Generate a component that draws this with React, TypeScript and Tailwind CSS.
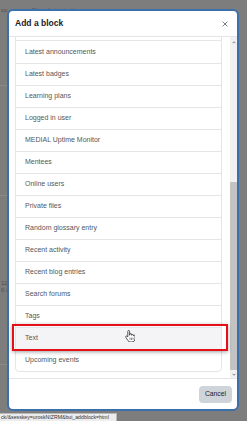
const blocks = [
  'Latest announcements',
  'Latest badges',
  'Learning plans',
  'Logged in user',
  'MEDIAL Uptime Monitor',
  'Mentees',
  'Online users',
  'Private files',
  'Random glossary entry',
  'Recent activity',
  'Recent blog entries',
  'Search forums',
  'Tags',
  'Text',
  'Upcoming events',
];

function HandCursor() {
  return (
    <svg width="10" height="12" viewBox="0 0 18 22" className="absolute left-[116px] top-[319px]">
      <path
        d="M5 2.5c0-1 .7-1.7 1.6-1.7s1.6.7 1.6 1.7v7l.6-.1V8c0-.9.7-1.5 1.5-1.5s1.5.6 1.5 1.5v1.6h.4c0-.9.7-1.5 1.5-1.5s1.5.6 1.5 1.5v1h.2c0-.8.6-1.3 1.4-1.3s1.4.6 1.4 1.4v5.2c0 3.4-2.4 6-5.8 6H9.6c-1.8 0-3.3-.9-4.3-2.4L1.4 13.4c-.5-.8-.3-1.8.5-2.3.7-.4 1.6-.3 2.2.3L5 12.6z"
        fill="#fff"
        stroke="#222"
        strokeWidth="1.4"
        strokeLinejoin="round"
      />
      <path d="M9 14v4M11.8 14v4M14.6 14v4" stroke="#222" strokeWidth="1" />
    </svg>
  );
}

export default function App() {
  return (
    <div className="relative h-[421px] w-[247px] overflow-hidden bg-[#7d7d7d] font-['Liberation_Sans',Arial,sans-serif]">
      {/* page behind the dialog */}
      <div className="flex h-full flex-col text-[6px] text-[#4e4e4e]">
        <div className="flex h-[14px] items-start gap-[24px] pt-[6px] pl-[1px]">
          <span>co</span>
          <span>Site administration</span>
        </div>
        <div className="mt-[71px] h-px w-[7px] bg-[#8a8a8a]" />
        <div className="mt-[109px] h-px w-[7px] bg-[#8a8a8a]" />
        <div className="mt-[84px] flex flex-col pl-[1px] leading-[7px]">
          <span>12</span>
          <span>0 A</span>
        </div>
        <div className="mt-[70px] h-px w-[7px] bg-[#8a8a8a]" />
        <div className="mt-auto flex h-[8px] w-[117px] items-center border-t border-r border-[#b9b9b9] bg-[#ececec] pl-[1px] text-[5.2px] leading-none whitespace-nowrap text-[#333]">
          ck/&amp;sesskey=uroskNIZRM&amp;bui_addblock=html
        </div>
      </div>

      {/* dialog */}
      <div className="absolute top-[9px] left-[7px] flex h-[402px] w-[232px] flex-col rounded-[6px] border-2 border-[#3b70aa] bg-white">
        <div className="flex h-[26px] items-center justify-between border-b border-[#e3e6e9] pr-[9px] pl-[6px]">
          <span className="text-[8.5px] font-bold text-[#1d2125]">Add a block</span>
          <svg width="6" height="6" viewBox="0 0 10 10">
            <path d="M1.5 1.5l7 7M8.5 1.5l-7 7" stroke="#6a737b" strokeWidth="1.5" strokeLinecap="round" />
          </svg>
        </div>

        <div className="flex h-[341px] gap-[8px] pl-[6px]">
          <div className="flex w-[208px] flex-col">
            <div className="h-[3px] border-x border-[#e3e6e9]" />
            <div className="flex flex-col overflow-hidden rounded-b-[4px] border border-[#e3e6e9]">
              {blocks.map((name, i) => (
                <div
                  key={name}
                  className={
                    'flex h-[22px] items-center pl-[9px] text-[7px] text-[#545759] ' +
                    (i > 0 ? 'border-t border-[#e3e6e9] ' : '') +
                    (name === 'Text' ? 'bg-[#f4f4f7] shadow-[0_1px_3px_rgba(0,0,0,0.15)]' : '')
                  }
                >
                  {name}
                </div>
              ))}
            </div>
          </div>

          <div className="flex w-[7px] flex-col bg-[#f1f1f1]">
            <div className="flex h-[10px] items-center justify-center">
              <svg width="4" height="3" viewBox="0 0 8 5">
                <path d="M1 4l3-3 3 3" stroke="#505050" strokeWidth="1.4" fill="none" />
              </svg>
            </div>
            <div className="mt-[135px] h-[188px] bg-[#c3c3c3]" />
            <div className="flex flex-1 items-center justify-center">
              <svg width="4" height="3" viewBox="0 0 8 5">
                <path d="M1 1l3 3 3-3" stroke="#505050" strokeWidth="1.4" fill="none" />
              </svg>
            </div>
          </div>
        </div>

        <div className="flex flex-1 items-center justify-end border-t border-[#e3e6e9] pr-[5px]">
          <button className="h-[17px] w-[33px] rounded-[4px] bg-[#ced4da] text-[6.8px] text-[#1d2125]">
            Cancel
          </button>
        </div>

        {/* annotation over the "Text" row */}
        <div className="absolute top-[313px] left-[3px] h-[27px] w-[216px] border-2 border-[#e3101a] shadow-[0_1px_4px_rgba(0,0,0,0.35)]" />
        <HandCursor />
      </div>
    </div>
  );
}
